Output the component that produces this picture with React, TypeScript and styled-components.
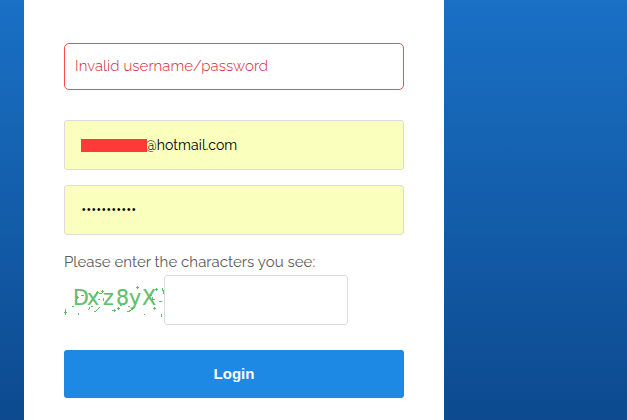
import React from 'react';
import styled, { createGlobalStyle } from 'styled-components';

const GlobalStyle = createGlobalStyle`
  * { box-sizing: border-box; }
  body {
    margin: 0;
    overflow: hidden;
    font-family: Raleway, Lato, sans-serif;
  }
`;

const Page = styled.main`
  height: 420px;
  padding-left: 24px;
  background: linear-gradient(#1970c5, #0d4a8f);
`;

const Card = styled.form`
  display: flex;
  flex-direction: column;
  width: 420px;
  height: 420px;
  padding: 43px 40px 0;
  background: #fff;
`;

const Alert = styled.div`
  height: 47px;
  margin-bottom: 30px;
  padding-left: 10px;
  border: 1px solid #fa4b4b;
  border-radius: 5px;
  color: #d01f30;
  font-size: 15px;
  font-weight: 300;
  line-height: 44px;
  letter-spacing: 0.07px;
`;

const Field = styled.div<{ $filled?: boolean; $width?: number }>`
  display: flex;
  align-items: center;
  width: ${(p) => p.$width ?? 340}px;
  height: 50px;
  padding-left: 16px;
  border: 1px solid #dcdcdc;
  border-radius: 3px;
  background: ${(p) => (p.$filled ? '#faffbd' : '#fff')};
  color: #000;
  font-size: 14px;
`;

const Credentials = styled.div`
  display: grid;
  gap: 15px;
`;

const Redaction = styled.span`
  z-index: 1;
  width: 66px;
  height: 13px;
  background: #ff3838;
`;

const Email = styled.span`
  margin-left: -2px;
  letter-spacing: 0.08px;
`;

const Password = styled.span`
  padding: 0 0 2px 1px;
  font-family: 'Liberation Sans', sans-serif;
  font-size: 10px;
  letter-spacing: 1.5px;
`;

const Label = styled.label`
  height: 40px;
  padding-top: 17px;
  color: #5c5c5c;
  font-size: 15px;
  line-height: 20px;
  letter-spacing: 0.03px;
  white-space: nowrap;
`;

const CaptchaRow = styled.div`
  display: flex;
  margin-bottom: 25px;
`;

const CaptchaArt = styled.svg`
  display: block;
  width: 100px;
  height: 50px;
  font: 20.5px 'DejaVu Sans', sans-serif;
  fill: #5fbf6f;
`;

const Login = styled.button`
  height: 48px;
  padding: 0 0 2px;
  border: 0;
  border-radius: 3px;
  background: #1e88e5;
  color: #fff;
  font: bold 15px 'Liberation Sans', Arial, sans-serif;
`;

const Captcha = () => (
  <CaptchaArt viewBox="0 0 100 50">
    <text x="9 23 39 52 65 78" y="30" stroke="#5fbf6f" strokeWidth="0.2">
      Dxz8yX
    </text>
    <path
      d="M1.5 34v6M0 37.5h3M8 31.5h2M12 22.5h3M13.5 21v3M17 20.5h3M14.5 38v2M25.5 32v2M24 34.5h1M32 17.5h3M33.5 16v3M31 19.5h2M30 21.5h2M37 16.5h3M38.5 15v3M35 18.5h3M39.5 23v3M34 24.5h2M30 36.5h2M32 35.5h1M33 34.5h1M34 33.5h1M35 32.5h1M27 31.5h2M48 35.5h4M50.5 34v3M53 33.5h3M54.5 32v3M56 30.5h2M63 36.5h3M65 35.5h2M67 34.5h2M68 33.5h2M69 32.5h2M70 31.5h1M64 31.5h2M72 12.5h3M73.5 11v3M91 14.5h3M92.5 13v3M87 24.5h4M88.5 22v4M86 20.5h2M95 26.5h3M89 33.5h3M90.5 32v3M80 39.5h1M97.5 39v3M98.5 13v3M99.5 15v4"
      fill="none"
      stroke="#5fbf6f"
      shapeRendering="crispEdges"
    />
  </CaptchaArt>
);

export default function App() {
  return (
    <>
      <GlobalStyle />
      <Page>
        <Card>
          <Alert>Invalid username/password</Alert>
          <Credentials>
            <Field $filled>
              <Redaction />
              <Email>@hotmail.com</Email>
            </Field>
            <Field $filled>
              <Password>•••••••••••</Password>
            </Field>
          </Credentials>
          <Label>Please enter the characters you see:</Label>
          <CaptchaRow>
            <Captcha />
            <Field $width={184} />
          </CaptchaRow>
          <Login type="button">Login</Login>
        </Card>
      </Page>
    </>
  );
}
